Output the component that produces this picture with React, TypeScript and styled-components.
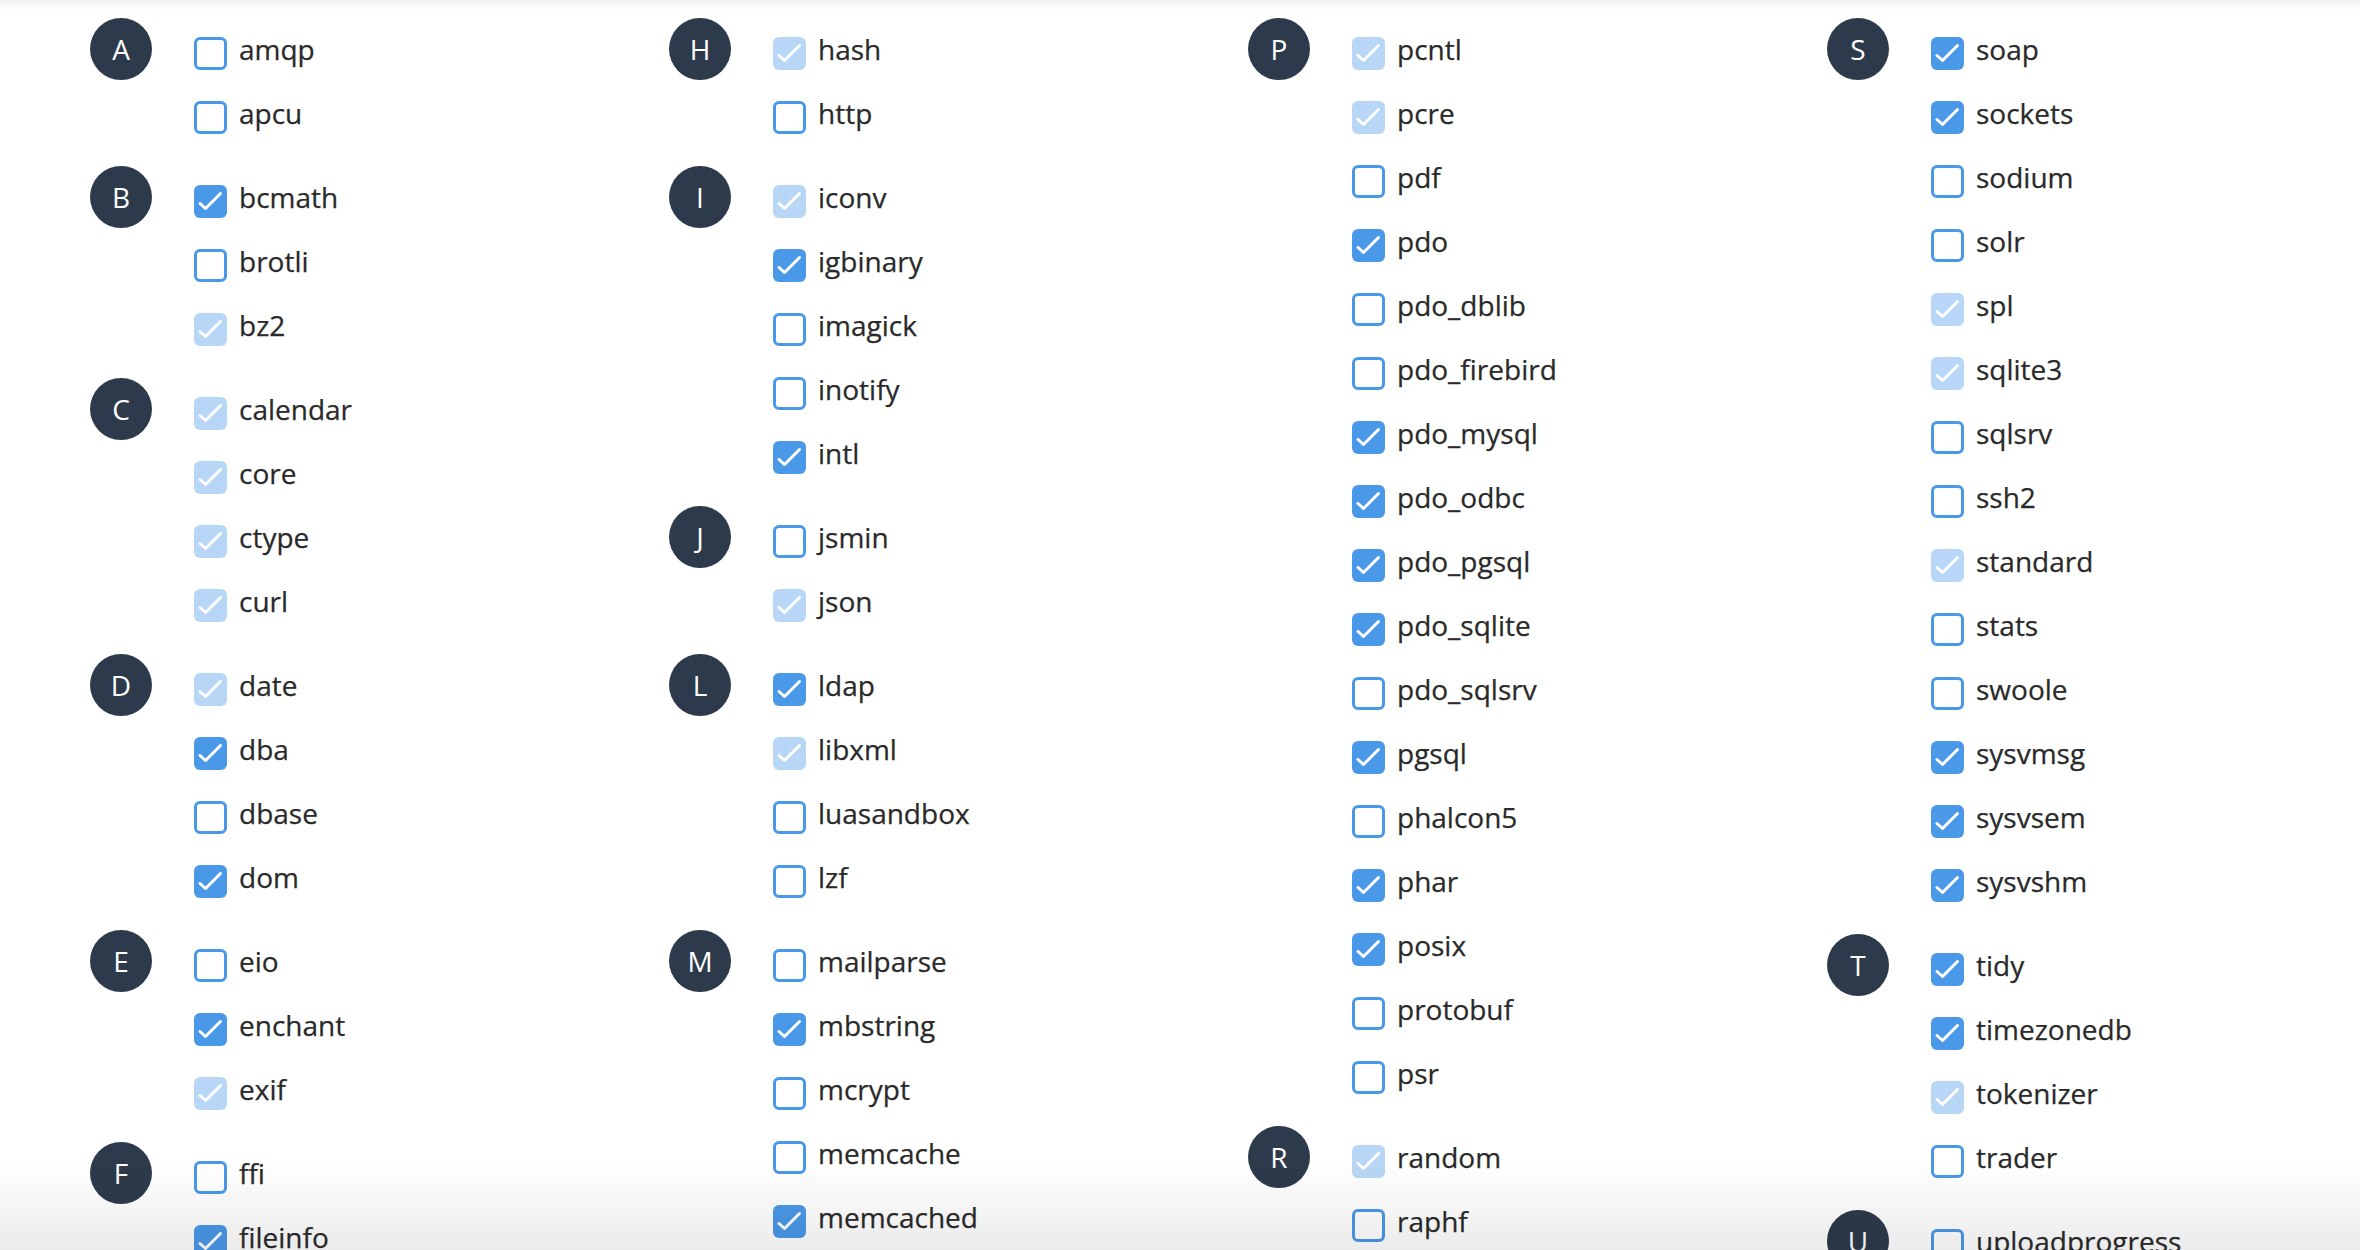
import React from "react";
import styled, { createGlobalStyle } from "styled-components";

type State = "on" | "off" | "locked";

interface Extension {
  name: string;
  state: State;
}

interface Group {
  letter: string;
  items: Extension[];
}

const ext = (spec: string): Extension[] =>
  spec.split(" ").map((token) => {
    const [name, flag] = token.split(":");
    const state: State = flag === "c" ? "on" : flag === "d" ? "locked" : "off";
    return { name, state };
  });

const columns: Group[][] = [
  [
    { letter: "A", items: ext("amqp apcu") },
    { letter: "B", items: ext("bcmath:c brotli bz2:d") },
    { letter: "C", items: ext("calendar:d core:d ctype:d curl:d") },
    { letter: "D", items: ext("date:d dba:c dbase dom:c") },
    { letter: "E", items: ext("eio enchant:c exif:d") },
    { letter: "F", items: ext("ffi fileinfo:c") },
  ],
  [
    { letter: "H", items: ext("hash:d http") },
    { letter: "I", items: ext("iconv:d igbinary:c imagick inotify intl:c") },
    { letter: "J", items: ext("jsmin json:d") },
    { letter: "L", items: ext("ldap:c libxml:d luasandbox lzf") },
    {
      letter: "M",
      items: ext("mailparse mbstring:c mcrypt memcache memcached:c"),
    },
  ],
  [
    {
      letter: "P",
      items: ext(
        "pcntl:d pcre:d pdf pdo:c pdo_dblib pdo_firebird pdo_mysql:c pdo_odbc:c pdo_pgsql:c pdo_sqlite:c pdo_sqlsrv pgsql:c phalcon5 phar:c posix:c protobuf psr"
      ),
    },
    { letter: "R", items: ext("random:d raphf") },
  ],
  [
    {
      letter: "S",
      items: ext(
        "soap:c sockets:c sodium solr spl:d sqlite3:d sqlsrv ssh2 standard:d stats swoole sysvmsg:c sysvsem:c sysvshm:c"
      ),
    },
    { letter: "T", items: ext("tidy:c timezonedb:c tokenizer:d trader") },
    { letter: "U", items: ext("uploadprogress") },
  ],
];

const GlobalStyle = createGlobalStyle`
  html, body {
    margin: 0;
    padding: 0;
    height: 100%;
    overflow: hidden;
    background: #fff;
  }
  body {
    font-family: "Open Sans", "Liberation Sans", sans-serif;
  }
`;

const Page = styled.main`
  position: relative;
  height: 100vh;
  overflow: hidden;
  box-sizing: border-box;
  padding: 18px 0 0 90px;
`;

const Grid = styled.div`
  display: grid;
  grid-template-columns: repeat(4, 579px);
  align-items: start;
`;

const Column = styled.div`
  display: flex;
  flex-direction: column;
  gap: 20px;
`;

const GroupRow = styled.section`
  display: flex;
  align-items: flex-start;
  gap: 42px;
`;

const Letter = styled.div`
  width: 62px;
  height: 62px;
  flex: 0 0 62px;
  border-radius: 50%;
  background: #2d3a4b;
  color: #fff;
  display: flex;
  align-items: center;
  justify-content: center;
  font-size: 28px;
  line-height: 1;
`;

const List = styled.ul`
  list-style: none;
  margin: 0;
  padding: 0;
  display: flex;
  flex-direction: column;
`;

const Row = styled.li`
  height: 64px;
  display: flex;
  align-items: center;
  gap: 12px;
  font-size: 28px;
  line-height: 64px;
  color: #2a2a2a;
  white-space: nowrap;
`;

const Label = styled.span`
  margin-top: -3px;
  -webkit-text-stroke: 0.25px #2a2a2a;
`;

const Box = styled.span<{ $state: State }>`
  box-sizing: border-box;
  width: 33px;
  height: 33px;
  flex: 0 0 33px;
  margin-top: 7px;
  border-radius: 6px;
  display: flex;
  align-items: center;
  justify-content: center;
  border: ${({ $state }) =>
    $state === "off" ? "3.5px solid #4a98e8" : "none"};
  background: ${({ $state }) =>
    $state === "on" ? "#4a98e8" : $state === "locked" ? "#b8d6f5" : "#fff"};
`;

const Tick = styled.svg`
  width: 33px;
  height: 33px;
  display: block;
`;

const TopShade = styled.div`
  position: absolute;
  top: 0;
  left: 0;
  right: 0;
  height: 10px;
  background: linear-gradient(rgba(0, 0, 0, 0.05), rgba(0, 0, 0, 0));
  pointer-events: none;
`;

const BottomFade = styled.div`
  position: absolute;
  left: 0;
  right: 0;
  bottom: 0;
  height: 90px;
  background: linear-gradient(rgba(0, 0, 0, 0), rgba(0, 0, 0, 0.08));
  pointer-events: none;
`;

const Checkbox: React.FC<{ state: State }> = ({ state }) => (
  <Box $state={state}>
    {state !== "off" ? (
      <Tick viewBox="0 0 33 33">
        <polyline
          points="6 18.5 11.5 23.5 26.5 8.5"
          fill="none"
          stroke="#fff"
          strokeWidth="3"
          strokeLinecap="round"
          strokeLinejoin="round"
        />
      </Tick>
    ) : null}
  </Box>
);

export default function App() {
  return (
    <>
      <GlobalStyle />
      <Page>
        <Grid>
          {columns.map((groups, i) => (
            <Column key={i}>
              {groups.map((group) => (
                <GroupRow key={group.letter}>
                  <Letter>{group.letter}</Letter>
                  <List>
                    {group.items.map((item) => (
                      <Row key={item.name}>
                        <Checkbox state={item.state} />
                        <Label>{item.name}</Label>
                      </Row>
                    ))}
                  </List>
                </GroupRow>
              ))}
            </Column>
          ))}
        </Grid>
        <TopShade />
        <BottomFade />
      </Page>
    </>
  );
}
